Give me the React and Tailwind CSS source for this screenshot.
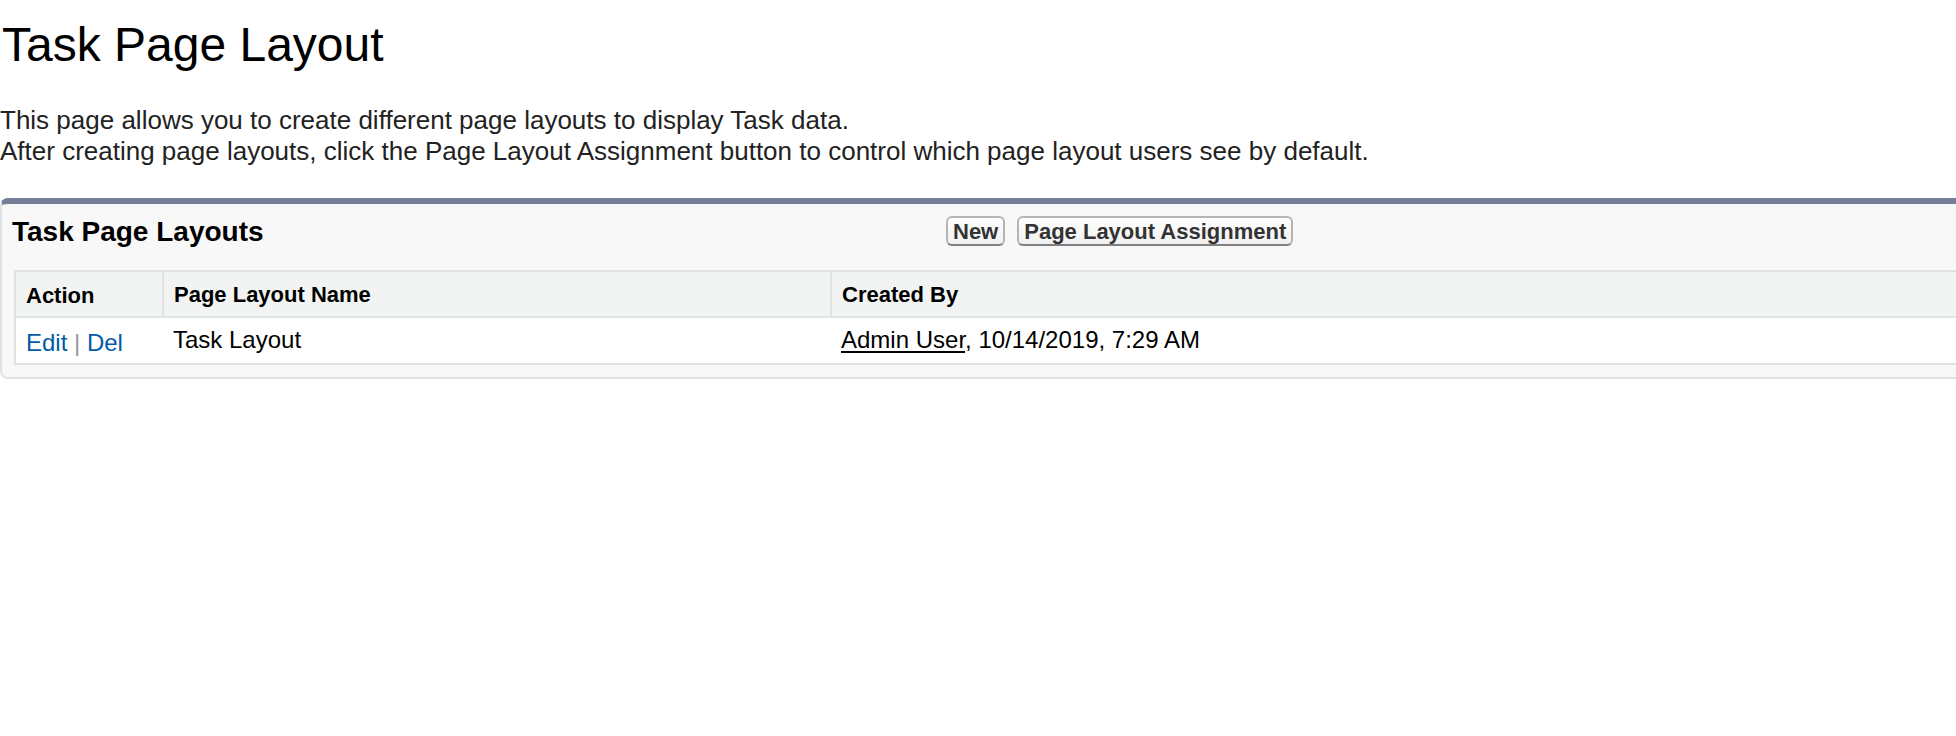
const layouts = [
  { name: 'Task Layout', author: 'Admin User', created: '10/14/2019, 7:29 AM' },
];

const columns = [
  { label: 'Action', className: 'w-[148px] border-l-2 pt-1' },
  { label: 'Page Layout Name', className: 'w-[668px] border-l-2 pt-0.5' },
  { label: 'Created By', className: 'border-l-2 pt-0.5' },
];

function ToolbarButton({ children }) {
  return (
    <button
      type="button"
      className="h-[30px] rounded-[6px] border-2 border-[#b5b5b5] border-b-[#7f7f7f] bg-linear-to-b from-white to-[#f0f0f0] px-[5px] text-[22px] leading-[28px] font-bold text-[#333333]"
    >
      {children}
    </button>
  );
}

export default function App() {
  return (
    <main className="overflow-hidden bg-white font-['Liberation_Sans',Arial,sans-serif] text-black">
      <h1 className="pt-[17px] pl-0.5 text-[48px] leading-[56px]">Task Page Layout</h1>
      <p className="mt-8 text-[26px] leading-[31px] text-[#222222]">
        This page allows you to create different page layouts to display Task data.
        <br />
        After creating page layouts, click the Page Layout Assignment button to control which page layout users see by
        default.
      </p>

      <section
        aria-labelledby="layouts-heading"
        className="mt-[31px] rounded-l-[8px] border-t-6 border-b-2 border-l-2 border-t-[#747e96] border-b-[#dfe3e6] border-l-[#dfe3e6] bg-[#f8f8f8] pb-3 pl-3"
      >
        <header className="flex h-[66px] items-start pt-3">
          <h2 id="layouts-heading" className="-ml-0.5 w-[934px] shrink-0 text-[28px] leading-[31px] font-bold">
            Task Page Layouts
          </h2>
          <div className="flex gap-3">
            <ToolbarButton>New</ToolbarButton>
            <ToolbarButton>Page Layout Assignment</ToolbarButton>
          </div>
        </header>

        <table className="w-full table-fixed border-separate border-spacing-0 text-left">
          <thead>
            <tr className="h-12 bg-[#f2f4f3] text-[22px] leading-[26px]">
              {columns.map((column) => (
                <th
                  key={column.label}
                  scope="col"
                  className={`border-y-2 border-[#e0e3e5] px-2.5 pb-0 font-bold ${column.className}`}
                >
                  {column.label}
                </th>
              ))}
            </tr>
          </thead>
          <tbody>
            {layouts.map((layout) => (
              <tr key={layout.name} className="h-[47px] bg-white align-top text-[24px] leading-7">
                <td className="border-b-2 border-l-2 border-[#dfe3e6] px-2.5 pt-[11px] pb-1">
                  <a href="#edit" className="text-[#015ba7]">
                    Edit
                  </a>
                  <span className="text-[#999999]"> | </span>
                  <a href="#delete" className="text-[#015ba7]">
                    Del
                  </a>
                </td>
                <td className="border-b-2 border-[#dfe3e6] px-[11px] pt-2 pb-1">{layout.name}</td>
                <td className="border-b-2 border-[#dfe3e6] px-[11px] pt-2 pb-1">
                  <a href="#user" className="underline decoration-black decoration-2 underline-offset-3 [text-decoration-skip-ink:none]">
                    {layout.author}
                  </a>
                  , {layout.created}
                </td>
              </tr>
            ))}
          </tbody>
        </table>
      </section>
    </main>
  );
}
